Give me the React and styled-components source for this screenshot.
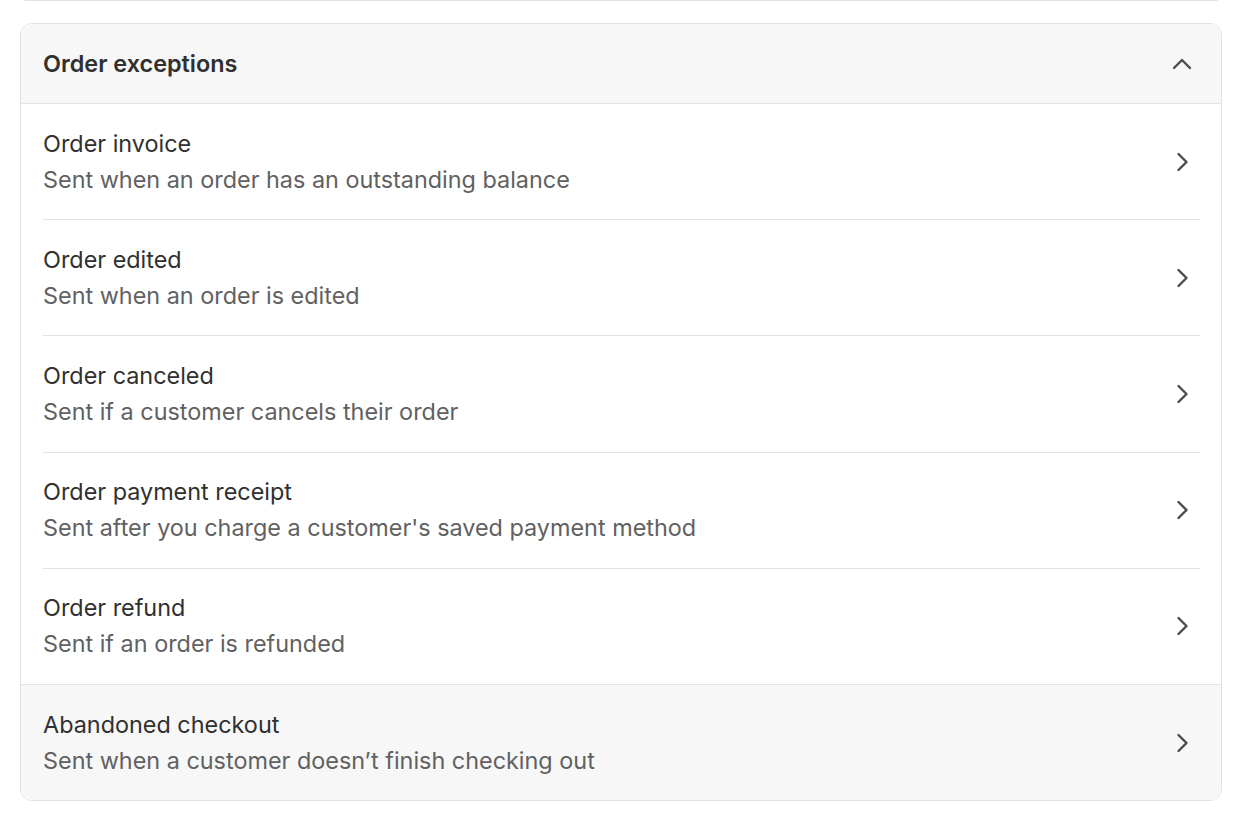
import React from "react";
import styled, { createGlobalStyle } from "styled-components";

const GlobalStyle = createGlobalStyle`
  * {
    box-sizing: border-box;
  }
  body {
    margin: 0;
    background: #ffffff;
    font-family: Inter, "Noto Sans", "Liberation Sans", sans-serif;
    color: #303030;
  }
`;

const Page = styled.div`
  padding: 0 20px;
`;

const PrevCard = styled.div`
  height: 12px;
  margin-top: -11px;
  border: 1px solid #e3e3e3;
  border-radius: 12px;
`;

const Card = styled.section`
  margin-top: 22px;
  border: 1px solid #e3e3e3;
  border-radius: 12px;
  overflow: hidden;
  background: #ffffff;
`;

const Header = styled.div`
  display: flex;
  align-items: center;
  justify-content: space-between;
  height: 80px;
  padding: 0 27px 0 22px;
  background: #f7f7f7;
  border-bottom: 1px solid #e3e3e3;
`;

const HeaderTitle = styled.h2`
  margin: 0;
  font-size: 23.4px;
  font-weight: 600;
  color: #303030;
`;

const Row = styled.div`
  padding: 0 21px 0 22px;
  background: ${(p) => (p.$active ? "#f7f7f7" : "#ffffff")};
  border-top: ${(p) => (p.$active ? "1px solid #e3e3e3" : "none")};
  cursor: pointer;
`;

const RowInner = styled.div`
  display: flex;
  align-items: center;
  justify-content: space-between;
  padding: 21.6px 6px 21.6px 0;
  border-top: ${(p) => (p.$divider ? "1px solid #e3e3e3" : "none")};
`;

const Texts = styled.div`
  display: flex;
  flex-direction: column;
`;

const Title = styled.span`
  font-size: 23.4px;
  line-height: 36px;
  font-weight: 400;
  color: #303030;
`;

const Subtitle = styled.span`
  font-size: 23.4px;
  line-height: 36px;
  color: #616161;
`;

const Icon = styled.svg`
  width: 24px;
  height: 24px;
  flex-shrink: 0;
  fill: none;
  stroke: #4a4a4a;
  stroke-width: 2.4;
  stroke-linecap: round;
  stroke-linejoin: round;
`;

const ChevronUp = () => (
  <Icon viewBox="0 0 24 24">
    <path d="M4 16 L12 8 L20 16" />
  </Icon>
);

const ChevronRight = () => (
  <Icon viewBox="0 0 24 24">
    <path d="M8.5 4 L16.5 12 L8.5 20" />
  </Icon>
);

const items = [
  { id: 1, title: "Order invoice", text: "Sent when an order has an outstanding balance" },
  { id: 2, title: "Order edited", text: "Sent when an order is edited" },
  { id: 3, title: "Order canceled", text: "Sent if a customer cancels their order" },
  { id: 4, title: "Order payment receipt", text: "Sent after you charge a customer's saved payment method" },
  { id: 5, title: "Order refund", text: "Sent if an order is refunded" },
  { id: 6, title: "Abandoned checkout", text: "Sent when a customer doesn\u2019t finish checking out", active: true },
];

export default function App() {
  return (
    <Page>
      <GlobalStyle />
      <PrevCard />
      <Card>
        <Header>
          <HeaderTitle>Order exceptions</HeaderTitle>
          <ChevronUp />
        </Header>
        {items.map(function (item, i) {
          return (
            <Row key={item.id} $active={item.active}>
              <RowInner $divider={i > 0 && !item.active}>
                <Texts>
                  <Title>{item.title}</Title>
                  <Subtitle>{item.text}</Subtitle>
                </Texts>
                <ChevronRight />
              </RowInner>
            </Row>
          );
        })}
      </Card>
    </Page>
  );
}
